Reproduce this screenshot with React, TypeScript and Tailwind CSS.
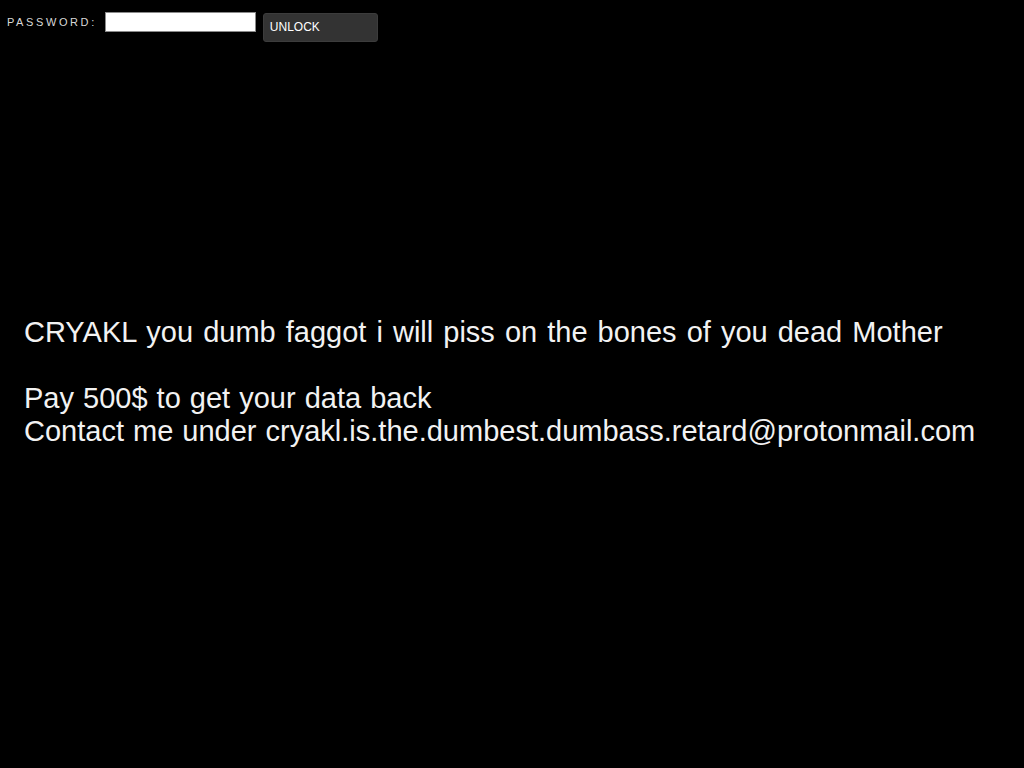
import React from 'react';

export default function App() {
  return (
    <div className="w-[1024px] h-[768px] bg-black text-white overflow-hidden" style={{ fontFamily: '"Liberation Sans", Arial, sans-serif' }}>
      {/* top bar */}
      <div className="flex items-start pt-[12px] pl-[7px]">
        <span className="mt-[3px] text-[11px] leading-[14px] tracking-[2.6px] text-[#d8d8d8]">PASSWORD:</span>
        <input
          type="text"
          className="ml-[8px] w-[151px] h-[20px] bg-white border border-[#8a8a8a] outline-none text-black text-[12px] px-[2px]"
        />
        <button className="ml-[7px] mt-[1px] w-[115px] h-[29px] bg-[#333333] border border-[#3c3c3c] rounded-[3px] text-left pl-[6px] pb-[1px] text-[12px] text-white">
          UNLOCK
        </button>
      </div>

      {/* message */}
      <div className="pl-[24px] pt-[274px] text-[29px] leading-[33px] text-[#f2f2f2] [word-spacing:1px]">
        <p className="[word-spacing:2px]">CRYAKL you dumb faggot i will piss on the bones of you dead Mother</p>
        <p>&nbsp;</p>
        <p>Pay 500$ to get your data back</p>
        <p>Contact me under cryakl.is.the.dumbest.dumbass.retard@protonmail.com</p>
      </div>
    </div>
  );
}
